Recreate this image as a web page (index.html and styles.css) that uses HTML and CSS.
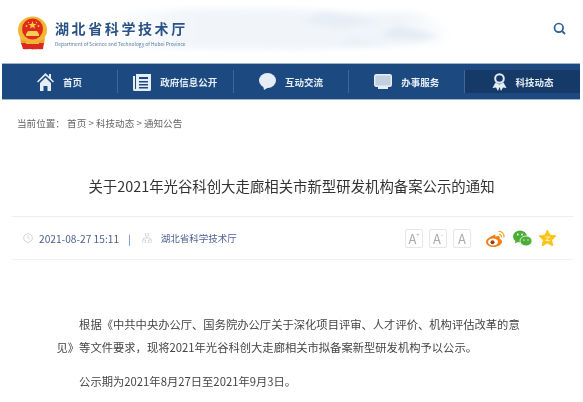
FILE: index.html
```html
<!DOCTYPE html>
<html lang="zh-CN">
<head>
    <meta charset="UTF-8" />
    <meta name="viewport" content="width=device-width, initial-scale=1.0" />
    <title>湖北省科学技术厅</title>
    <link rel="stylesheet" href="styles.css">
</head>
<body>
    <header class="top">
        <div class="brand">
            <svg class="emblem" width="31" height="34" viewBox="0 0 31 34">
                <ellipse cx="15.5" cy="14" rx="14.5" ry="13.5" fill="#f2b632"/>
                <circle cx="15.5" cy="13" r="10.5" fill="#e0281c"/>
                <polygon points="15.5,5 16.6,8 19.6,8 17.2,9.8 18,12.6 15.5,11 13,12.6 13.8,9.8 11.4,8 14.4,8" fill="#f8d23c"/>
                <circle cx="9.5" cy="10" r=".9" fill="#f8d23c"/>
                <circle cx="21.5" cy="10" r=".9" fill="#f8d23c"/>
                <circle cx="11.5" cy="6.5" r=".7" fill="#f8d23c"/>
                <circle cx="19.5" cy="6.5" r=".7" fill="#f8d23c"/>
                <path d="M9 20h13v-2l-2-3h-9l-2 3z" fill="#f5cf55"/>
                <path d="M3 21c3 4 7 5 12.500 5s9.500-1 12.500-5l-1 7c-3 1-7 1.500-11.500 1.500S7 29 4 28z" fill="#e8a52a"/>
                <path d="M4 27h23l-1 6c-2 .6-4 .3-5 0-2 .5-8 .5-10 0-1 .3-3 .6-5 0z" fill="#d92a1e"/>
                <rect x="9" y="26" width="13" height="2" fill="#f2b632"/>
            </svg>
            <div class="brand-text">
                <div class="brand-name">湖北省科学技术厅</div>
                <div class="brand-en">Department of Science and Technology of Hubei Province</div>
            </div>
        </div>
        <svg class="search" width="13" height="13" viewBox="0 0 13 13">
            <circle cx="5.800" cy="5.800" r="4.300" fill="none" stroke="#2a5f9a" stroke-width="1.700"/>
            <path d="M9 9l3 3" stroke="#2a5f9a" stroke-width="1.800"/>
        </svg>
    </header>

    <nav class="nav">
        <a class="nav-item">
            <svg width="17" height="18" viewBox="0 0 17 18"><path d="M8.500 0L0 8.500l1 1 7.500-7 7.500 7 1-1-3-3V1h-2v2.500z" fill="#e6edf5"/><path d="M3 10l5.500-5.500L14 10v8h-3.500v-5h-4v5H3z" fill="#e6edf5"/></svg>
            <span>首页</span>
        </a>
        <a class="nav-item">
            <svg width="18" height="18" viewBox="0 0 18 18"><path d="M0 3h2v13h1V1h15v15.500a1.500 1.500 0 0 1-1.500 1.500h-15A1.500 1.500 0 0 1 0 16.500z" fill="#e6edf5"/><path d="M6 4h9v2H6zM6 8h9v1.500H6zM6 11h9v1.500H6zM6 14h9v1.500H6z" fill="#1c4a80"/></svg>
            <span>政府信息公开</span>
        </a>
        <a class="nav-item">
            <svg width="17" height="17" viewBox="0 0 17 17"><ellipse cx="8.500" cy="7.500" rx="8.500" ry="7.500" fill="#e6edf5"/><path d="M4 12l1 5 5-3z" fill="#e6edf5"/></svg>
            <span>互动交流</span>
        </a>
        <a class="nav-item">
            <svg width="18" height="15" viewBox="0 0 18 15"><rect x=".7" y=".7" width="16.600" height="11.600" rx="1.500" fill="#c3d0e0" stroke="#e6edf5" stroke-width="1.400"/><path d="M4 13h10v2H4z" fill="#e6edf5"/></svg>
            <span>办事服务</span>
        </a>
        <a class="nav-item active">
            <svg width="15" height="18" viewBox="0 0 15 18"><circle cx="7.500" cy="5.500" r="4.300" fill="none" stroke="#e6edf5" stroke-width="2"/><path d="M3.500 9.500L.5 15l3.500-.5L6 18l1.500-4 1.500 4 2-3.500 3.500.5-3-5.500-4 2z" fill="#e6edf5"/></svg>
            <span>科技动态</span>
        </a>
    </nav>

    <div class="crumb">当前位置：&nbsp;首页 &gt; 科技动态 &gt; 通知公告</div>

    <h1 class="title">关于2021年光谷科创大走廊相关市新型研发机构备案公示的通知</h1>

    <div class="meta">
        <div class="meta-left">
            <svg width="10" height="10" viewBox="0 0 10 10"><circle cx="5" cy="5" r="4.300" fill="none" stroke="#d4d4d4"/><path d="M5 2.500V5l1.800 1.200" fill="none" stroke="#d4d4d4"/></svg>
            <span class="date">2021-08-27 15:11</span>
            <span class="bar">|</span>
            <svg width="10" height="10" viewBox="0 0 10 10"><path d="M3.500 0h3v3h-3zM0 7h3.500v3H0zM6.500 7H10v3H6.500zM5 3v2M1.700 7V5h6.600v2" fill="none" stroke="#d8d8d8"/></svg>
            <span class="source">湖北省科学技术厅</span>
        </div>
        <div class="meta-right">
            <div class="font-btns">
                <span class="font-btn">A<sup>+</sup></span>
                <span class="font-btn">A<sup>-</sup></span>
                <span class="font-btn">A</span>
            </div>
            <div class="share">
                <svg width="20" height="17" viewBox="0 0 20 17"><path d="M8 5C3.500 6.500 0 9.500 0 12c0 3 4 5 7.500 5 4.500 0 8.500-2.500 8.500-5.500 0-1.800-1.500-2.300-2.500-2.500.6-1.500.4-2.800-1-3-1-.1-2 .3-3 .7.300-1.500-.3-2.200-1.500-1.700z" fill="#f57f17"/><ellipse cx="7" cy="12" rx="5" ry="3.400" fill="#fff"/><circle cx="6.500" cy="12.200" r="2" fill="#a33b10"/><path d="M12.500 1.500c3-.5 6 2 5.500 6M13 4.500c1.500-.3 2.800 1 2.500 2.800" fill="none" stroke="#f5a623" stroke-width="1.200"/></svg>
                <svg width="19" height="17" viewBox="0 0 19 17"><ellipse cx="7" cy="6.500" rx="7" ry="6" fill="#4cae34"/><path d="M2.500 10.500l-.5 3 3-1.500z" fill="#4cae34"/><ellipse cx="13" cy="11" rx="6" ry="5" fill="#4cae34" stroke="#fff" stroke-width=".8"/><circle cx="4.800" cy="4.500" r=".9" fill="#fff"/><circle cx="9" cy="4.500" r=".9" fill="#fff"/><circle cx="11" cy="10" r=".7" fill="#fff"/><circle cx="15" cy="10" r=".7" fill="#fff"/></svg>
                <svg width="17" height="16" viewBox="0 0 17 16"><polygon points="8.500,0 11,5.200 17,6 12.600,10 13.800,16 8.500,13 3.200,16 4.400,10 0,6 6,5.200" fill="#fcc419" stroke="#fcc419" stroke-linejoin="round"/><path d="M6.500 7h4L6.800 10.500h4" fill="none" stroke="#fff6d0" stroke-width=".9"/></svg>
            </div>
        </div>
    </div>

    <article class="content">
        <p>根据《中共中央办公厅、国务院办公厅关于深化项目评审、人才评价、机构评估改革的意见》等文件要求，现将2021年光谷科创大走廊相关市拟备案新型研发机构予以公示。</p>
        <p>公示期为2021年8月27日至2021年9月3日。</p>
    </article>
</body>
</html>
```

FILE: styles.css
```css
html, body {
    margin: 0;
    padding: 0;
    height: 402px;
    overflow: hidden;
    background-color: #fff;
}
body {
    font-family: "Noto Sans CJK SC", "Noto Sans", sans-serif;
    color: #444;
    filter: blur(0.4px);
}
.top {
    height: 63px;
    padding: 0 17px;
    display: flex;
    align-items: center;
    justify-content: space-between;
    /* ink-wash mountains behind the site name */
    background-repeat: no-repeat;
    background-image: url("data:image/svg+xml,%3Csvg xmlns='http://www.w3.org/2000/svg' width='583' height='63'%3E%3Cdefs%3E%3Cfilter id='b'%3E%3CfeGaussianBlur stdDeviation='3'/%3E%3C/filter%3E%3ClinearGradient id='g' x1='0' x2='1' y1='0' y2='0'%3E%3Cstop offset='0' stop-color='%23eef3f8' stop-opacity='0'/%3E%3Cstop offset='.25' stop-color='%23eef3f8'/%3E%3Cstop offset='.85' stop-color='%23edf2f8'/%3E%3Cstop offset='1' stop-color='%23eef3f8' stop-opacity='0'/%3E%3C/linearGradient%3E%3C/defs%3E%3Cg filter='url(%23b)'%3E%3Cpath fill='url(%23g)' d='M100 48L110 14 180 9 260 8 320 10 370 13 420 12 455 30 450 44 300 50z' opacity='.8'/%3E%3Cpath fill='%23e2eaf3' d='M380 36L398 26 412 30 440 36 420 40z'/%3E%3Cpath fill='%23e6edf5' d='M300 22L325 12 350 16 380 22 340 28z'/%3E%3Cpath fill='%23e8eff6' d='M335 46L350 38 375 42 390 46z'/%3E%3C/g%3E%3C/svg%3E");
}
.brand {
    display: flex;
    align-items: center;
    gap: 7px;
    margin-top: 3px;
}
.brand-text {
    color: #2a5286;
}
.brand-name {
    font-size: 14px;
    font-weight: 700;
    line-height: 18px;
    letter-spacing: 2.600px;
    white-space: nowrap;
}
.brand-en {
    font-size: 4.900px;
    line-height: 7px;
    margin-top: 3px;
    white-space: nowrap;
    color: #5a7ca8;
}
.search {
    margin-top: -6px;
}
.nav {
    height: 23px;
    margin: 0 3px 0 2px;
    padding: 6px 0;
    display: flex;
    align-items: stretch;
    background-color: #1c4a80;
    border-top: 1px solid #9fb3cc;
    border-bottom: 1px solid #9fb3cc;
}
.nav-item {
    flex: 1;
    display: flex;
    align-items: center;
    justify-content: center;
    gap: 9px;
    font-size: 9.500px;
    font-weight: 700;
    color: #e6edf5;
    border-right: 1px solid #3f6798;
}
.nav-item:last-child {
    border-right: none;
}
.nav-item.active {
    background-color: #163a68;
}
.crumb {
    margin: 16px 0 0 17px;
    font-size: 9.600px;
    line-height: 14px;
    color: #666;
}
.title {
    margin: 45px 0 0;
    font-size: 14.400px;
    font-weight: 400;
    line-height: 22px;
    text-align: center;
    color: #333;
}
.meta {
    margin: 19px 10px 0 12px;
    height: 42px;
    padding: 0 17px 0 11px;
    display: flex;
    align-items: center;
    justify-content: space-between;
    border-top: 1px solid #eee;
    border-bottom: 1px solid #f2f2f2;
}
.meta-left {
    display: flex;
    align-items: center;
    font-size: 10.200px;
    color: #4f5f92;
}
.date {
    margin-left: 6px;
}
.bar {
    margin: 0 11px 0 9px;
    color: #3f74b0;
}
.source {
    margin-left: 9px;
    font-size: 9.500px;
}
.meta-right {
    display: flex;
    align-items: center;
    gap: 15px;
}
.font-btns {
    display: flex;
    gap: 6px;
}
.font-btn {
    width: 18px;
    height: 19px;
    box-sizing: border-box;
    display: flex;
    align-items: center;
    justify-content: center;
    border: 1px solid #e6e6e6;
    border-radius: 2px;
    font-size: 13px;
    line-height: 1;
    color: #aaa;
}
.font-btn sup {
    font-size: 6px;
    margin-top: -7px;
}
.share {
    display: flex;
    align-items: center;
    gap: 7px;
}
.content {
    margin: 53px 60px 0 56.500px;
    font-size: 11.300px;
    line-height: 23px;
    color: #444;
}
.content p {
    margin: 0 0 11px;
    text-indent: 2em;
}
```
